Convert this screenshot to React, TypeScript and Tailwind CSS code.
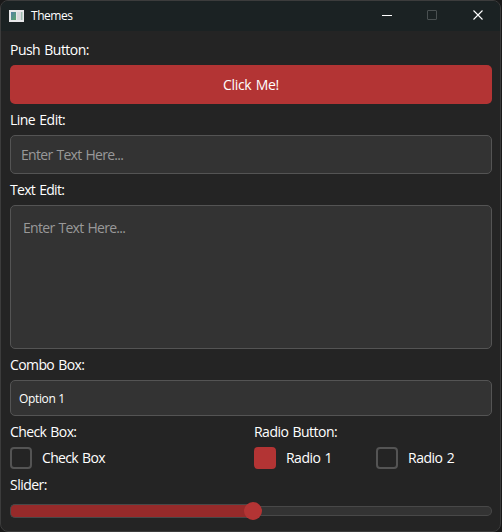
import type { ReactNode } from 'react';

function Label({ children, className = 'tracking-[-0.52px]' }: { children: ReactNode; className?: string }) {
  return (
    <span
      className={`block h-[19px] whitespace-nowrap text-[14px] leading-[20px] text-white [word-spacing:1px] ${className}`}
    >
      {children}
    </span>
  );
}

function Box({ checked = false }: { checked?: boolean }) {
  return (
    <span
      className={`h-[22px] w-[22px] shrink-0 rounded-[4px] border-2 ${
        checked ? 'border-[#b33434] bg-[#b33434]' : 'border-[#545454] bg-[#242424]'
      }`}
    />
  );
}

function TitleBar() {
  return (
    <header className="flex h-[30px] shrink-0 items-center bg-[#1b2223] pl-2">
      <svg width="15" height="12" viewBox="0 0 15 12" className="-mt-px shrink-0">
        <defs>
          <linearGradient id="pane" x1="0" y1="0" x2="1" y2="1">
            <stop offset="0" stopColor="#527fa5" />
            <stop offset="1" stopColor="#5aa56c" />
          </linearGradient>
        </defs>
        <rect width="15" height="12" fill="#e8e8ea" />
        <rect x="2" y="2" width="5" height="8" fill="url(#pane)" />
        <rect x="8" y="2" width="4" height="8" fill="#d8d8dc" />
        <rect x="12" y="2" width="1.5" height="8" fill="#9dbdb0" />
      </svg>
      <span className="ml-[7px] text-[12px] leading-4 tracking-[-0.45px] text-white">Themes</span>
      <svg width="138" height="30" viewBox="0 0 138 30" fill="none" className="-mr-px ml-auto">
        <path d="M19 14.5h10" stroke="#fff" />
        <rect x="64.5" y="9.5" width="9" height="9" rx=".5" stroke="#4a5051" />
        <path d="M110.5 9.5l9 9m0-9l-9 9" stroke="#fff" strokeWidth="1.1" />
      </svg>
    </header>
  );
}

export default function App() {
  return (
    <div className="h-[532px] w-[502px] bg-[#191919] pr-px font-['Open_Sans','Noto_Sans',sans-serif]">
      <div className="flex h-full flex-col overflow-hidden rounded-[8px] border border-[#3c3c3c] bg-[#242424]">
        <TitleBar />
        <main className="flex flex-col gap-1.5 pl-[9px] pr-2 pt-[9px]">
          <Label>Push Button:</Label>
          <button className="h-[39px] rounded-[5px] bg-[#b33434] text-[14px] tracking-[-0.3px] text-white [word-spacing:1px]">
            Click Me!
          </button>
          <Label>Line Edit:</Label>
          <input
            className="h-[39px] rounded-[5px] border border-[#545454] bg-[#333] px-2.5 text-[14px] tracking-[-0.7px] outline-none [word-spacing:1px] placeholder:text-[#999]"
            placeholder="Enter Text Here..."
          />
          <Label className="tracking-[-0.68px]">Text Edit:</Label>
          <textarea
            className="h-36 resize-none rounded-[5px] border border-[#545454] bg-[#333] px-3 py-3 text-[14px] leading-[19px] tracking-[-0.7px] outline-none [word-spacing:1px] placeholder:text-[#999]"
            placeholder="Enter Text Here..."
          />
          <Label className="tracking-[-0.6px]">Combo Box:</Label>
          <div className="flex h-9 items-center rounded-[5px] border border-[#545454] bg-[#333] px-2 pt-0.5 text-[12px] tracking-[-0.35px] text-white">
            Option 1
          </div>
          <div className="grid grid-cols-[244px_1fr] gap-y-1.5">
            <Label className="tracking-[-0.6px]">Check Box:</Label>
            <Label>Radio Button:</Label>
            <div className="flex items-center gap-2.5">
              <Box />
              <Label className="-mt-px tracking-[-0.65px]">Check Box</Label>
            </div>
            <div className="grid grid-cols-[122px_1fr]">
              <div className="flex items-center gap-2.5">
                <Box checked />
                <Label className="-mt-px tracking-[-0.52px]">Radio 1</Label>
              </div>
              <div className="flex items-center gap-2.5">
                <Box />
                <Label className="-mt-px tracking-[-0.48px]">Radio 2</Label>
              </div>
            </div>
          </div>
          <Label>Slider:</Label>
          <div className="flex h-[22px] items-center">
            <div className="-mr-[9px] h-3.5 w-[243px] rounded-l-[5px] border border-r-0 border-[#484848] bg-[#962a2a]" />
            <div className="z-10 -mr-[9px] h-[18px] w-[18px] shrink-0 rounded-full bg-[#b33434]" />
            <div className="h-2.5 flex-1 rounded-r-[5px] border border-l-0 border-[#484848] bg-[#333]" />
          </div>
        </main>
      </div>
    </div>
  );
}
